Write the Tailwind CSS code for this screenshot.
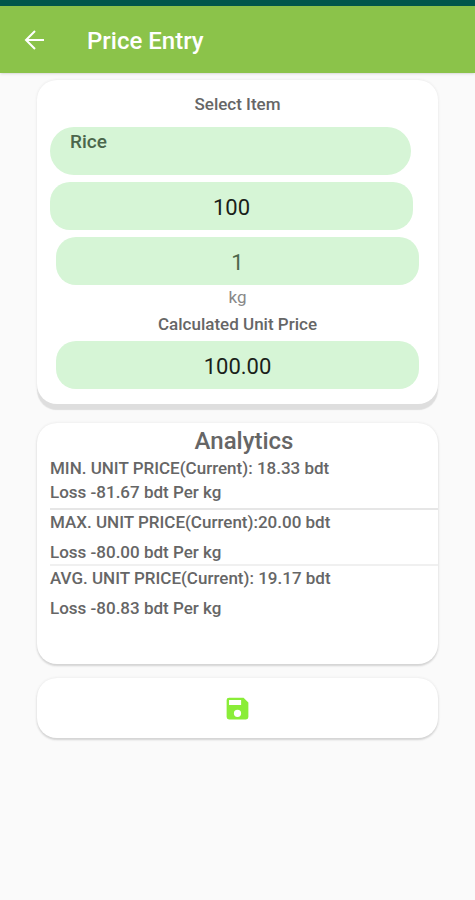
<!DOCTYPE html>
<html lang="en">
<head>
  <meta charset="UTF-8">
  <meta name="viewport" content="width=device-width, initial-scale=1.0">
  <title>Price Entry</title>
  <script src="https://cdn.jsdelivr.net/npm/@tailwindcss/browser@4"></script>
</head>
<body class="bg-[#fafafa] min-h-screen font-[Roboto,sans-serif] text-[#666666]">
  <header class="bg-[#8bc34a] text-white border-t-6 border-[#00574b] h-[73px] pl-[23px] pr-6 flex items-center gap-10 shadow-sm">
    <a href="#" aria-label="Back" class="block">
      <svg class="w-6 h-6" viewBox="0 0 24 24" fill="none" stroke="currentColor" stroke-width="2">
        <path d="M21 12H3M12 3l-9 9 9 9" />
      </svg>
    </a>
    <h1 class="text-2xl font-medium pt-0.5">Price Entry</h1>
  </header>

  <main class="px-[37px] pt-[7px] flex flex-col">
    <!-- Entry form -->
    <form id="priceForm" class="bg-white rounded-[20px] shadow-[0_6px_1px_#dedede,0_0_3px_#e4e4e4] px-[13px] pt-3 pb-[15px] mb-[19px] flex flex-col">
      <label for="item" class="text-[17px] leading-6 font-medium text-center">Select Item</label>
      <select id="item" class="appearance-none bg-[#d6f5d6] text-[#4b664b] text-[19px] font-medium rounded-full h-12 mt-[11px] mr-[14px] pl-5 pb-[18px]">
        <option>Rice</option>
      </select>
      <input
        type="text"
        id="price"
        value="100"
        aria-label="Price"
        class="bg-[#d6f5d6] text-[#1a1f1a] text-[22px] text-center rounded-[20px] h-12 mt-[7px] mr-3 pt-0.5"
      />
      <input
        type="text"
        id="quantity"
        value="1"
        aria-label="Quantity"
        class="bg-[#d6f5d6] text-[#4b664b] text-[22px] text-center rounded-[20px] h-12 mt-[7px] mx-1.5 pt-0.5"
      />
      <p class="text-[17px] leading-6 text-center text-[#888888]">kg</p>
      <label for="unitPrice" class="text-[17px] leading-6 font-medium text-center mt-[3px]">Calculated Unit Price</label>
      <input
        type="text"
        id="unitPrice"
        value="100.00"
        class="bg-[#d6f5d6] text-[#1a1f1a] text-[22px] text-center rounded-[20px] h-12 mt-[5px] mx-1.5 pt-0.5"
      />
    </form>

    <!-- Analytics -->
    <section class="bg-white rounded-[20px] shadow-[0_2px_2px_#d4d4d4,0_0_3px_#e4e4e4] pl-[13px] pt-1 pb-11 mb-[14px] text-[17px] leading-6 font-medium">
      <h2 class="text-2xl leading-7 text-center">Analytics</h2>
      <div class="border-b-2 border-[#e6e6e6] pt-px pb-1">
        <p>MIN. UNIT PRICE(Current): 18.33 bdt</p>
        <p>Loss -81.67 bdt Per kg</p>
      </div>
      <div class="border-b-2 border-[#f0f0f0]">
        <p class="mb-1.5">MAX. UNIT PRICE(Current):20.00 bdt</p>
        <p>Loss -80.00 bdt Per kg</p>
      </div>
      <div>
        <p class="mb-1.5">AVG. UNIT PRICE(Current): 19.17 bdt</p>
        <p>Loss -80.83 bdt Per kg</p>
      </div>
    </section>

    <button
      type="submit"
      form="priceForm"
      aria-label="Save"
      class="bg-white rounded-[20px] shadow-[0_2px_2px_#d4d4d4,0_0_3px_#e4e4e4] h-[60px] flex justify-center items-center text-[#8aed38]"
    >
      <svg class="w-[29px] h-[29px]" viewBox="0 0 24 24" fill="currentColor">
        <path d="M17 3H5a2 2 0 0 0-2 2v14a2 2 0 0 0 2 2h14a2 2 0 0 0 2-2V7l-4-4zm-5 16a3 3 0 1 1 0-6 3 3 0 0 1 0 6zm3-10H5V5h10v4z" />
      </svg>
    </button>
  </main>
</body>
</html>
